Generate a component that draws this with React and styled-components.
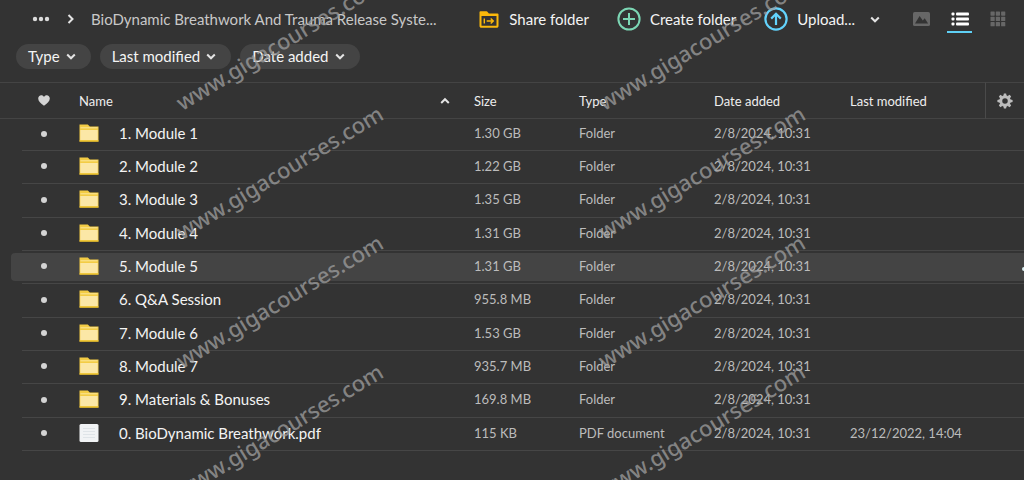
import React from "react";
import styled, { createGlobalStyle, css } from "styled-components";

const GlobalStyle = createGlobalStyle`
  * {
    box-sizing: border-box;
  }
  body {
    margin: 0;
    background: #333333;
    color: #f4f4f4;
    font-family: Lato, "Open Sans", sans-serif;
    font-size: 15px;
  }
  button {
    padding: 0;
    border: 0;
    background: none;
    color: inherit;
    font: inherit;
    cursor: pointer;
  }
  svg {
    flex-shrink: 0;
  }
`;

const Page = styled.main`
  position: relative;
  isolation: isolate;
  min-height: 100vh;
  overflow: hidden;
`;

const Toolbar = styled.header`
  display: flex;
  align-items: center;
  height: 38px;
  padding: 0 14px 0 32px;
`;

const Breadcrumb = styled.nav`
  display: flex;
  flex: 1;
  align-items: center;
  gap: 17px;
  min-width: 0;
`;

const IconButton = styled.button`
  display: flex;
  align-items: center;
  justify-content: center;
`;

const Crumb = styled.span`
  color: #c8c8c8;
  white-space: nowrap;
`;

const Actions = styled.div`
  display: flex;
  align-items: center;
  gap: 28px;
`;

const ActionButton = styled.button`
  display: flex;
  align-items: center;
  gap: 9px;
  white-space: nowrap;
`;

const UploadGroup = styled.div`
  display: flex;
  align-items: center;
  gap: 15px;
`;

const Views = styled.div`
  display: flex;
  gap: 13px;
  margin-left: 29px;
`;

const ViewButton = styled.button`
  display: flex;
  align-items: center;
  justify-content: center;
  width: 25px;
  height: 28px;
  padding-top: 2px;
  color: ${(props) => (props.$active ? "#ffffff" : "#676767")};
  border-bottom: 2px solid
    ${(props) => (props.$active ? "#5fd0f5" : "transparent")};
`;

const Filters = styled.div`
  display: flex;
  gap: 9px;
  height: 44px;
  padding: 6px 16px 0;
`;

const FilterButton = styled.button`
  display: flex;
  align-items: center;
  gap: 6px;
  height: 25px;
  padding: 0 15px 2px 12px;
  border-radius: 13px;
  background: #444444;
  white-space: nowrap;
`;

const FileTable = styled.table`
  width: 100%;
  table-layout: fixed;
  border-spacing: 0;
  font-size: 13px;
`;

const Col = styled.col`
  width: ${(props) => (props.$width ? `${props.$width}px` : "auto")};
`;

const HeadCell = styled.th`
  height: 37px;
  padding: 0;
  border-top: 1px solid #444444;
  border-bottom: 1px solid #444444;
  color: #eeeeee;
  font-weight: 400;
  text-align: left;
  white-space: nowrap;

  &:first-child {
    padding-left: 38px;
  }
  &:last-child {
    border-left: 1px solid #4a4a4a;
  }
`;

const HeadInner = styled.div`
  display: flex;
  align-items: center;
  justify-content: ${(props) => (props.$center ? "center" : "space-between")};
  padding-right: ${(props) => (props.$sorted ? "24px" : "0")};
`;

const Cell = styled.td`
  padding: 0 0 4px;
  color: #bcbcbc;
  white-space: nowrap;
`;

const FavouriteCell = styled(Cell)`
  padding: 0 0 3px 41px;
`;

const Row = styled.tr`
  position: relative;
  height: 33px;
  background: linear-gradient(#464646, #464646) 22px 100% / 100% 1px no-repeat;

  &:first-child {
    height: 32px;
  }
  &:nth-child(3n) {
    height: 34px;
  }

  ${(props) =>
    props.$selected &&
    css`
      ${FavouriteCell}::before {
        content: "";
        position: absolute;
        z-index: -1;
        inset: 2px 0 3px 11px;
        border-radius: 4px 0 0 4px;
        background: #444444;
      }
    `}
`;

const Dot = styled.span`
  display: block;
  width: 6px;
  height: 6px;
  border-radius: 50%;
  background: #d4d4d4;
`;

const MoreCell = styled(Cell)`
  text-align: right;
`;

const MoreMark = styled.span`
  display: inline-block;
  width: 2px;
  height: 4px;
  border-radius: 2px 0 0 2px;
  background: #d8eef0;
`;

const FileName = styled.div`
  display: flex;
  align-items: center;
  gap: 20px;
  color: #f4f4f4;
  font-size: 15px;
`;

// Tiled over the whole page, one mark per cell
const Watermarks = styled.div`
  position: absolute;
  inset: 0;
  display: grid;
  grid-template-columns: repeat(2, 422px);
  grid-auto-rows: 129px;
  padding-left: 187px;
  overflow: hidden;
  pointer-events: none;
`;

const Watermark = styled.span`
  align-self: start;
  justify-self: start;
  padding-top: 83px;
  color: rgba(158, 158, 158, 0.75);
  font-family: "Noto Sans", sans-serif;
  font-size: 22px;
  font-weight: 500;
  line-height: 36px;
  transform: rotate(-31deg);
  transform-origin: 0 100%;
`;

const Chevron = ({ up, size = 10 }) => (
  <svg width={size} height={size} viewBox="0 0 10 10" fill="none">
    <path
      d={up ? "M1.2 7 5 3.2 8.8 7" : "M1.2 3.5 5 7.3 8.8 3.5"}
      stroke="#e4e4e4"
      strokeWidth="2"
    />
  </svg>
);

const DotsIcon = () => (
  <svg width="18" height="6" viewBox="0 0 18 6" fill="#dcdcdc">
    <circle cx="3" cy="3" r="2.2" />
    <circle cx="9" cy="3" r="2.2" />
    <circle cx="15" cy="3" r="2.2" />
  </svg>
);

const CrumbArrow = () => (
  <svg width="7" height="10" viewBox="0 0 7 10" fill="none">
    <path d="M1.5 1 5.5 5 1.5 9" stroke="#e4e4e4" strokeWidth="2" />
  </svg>
);

const ShareFolderIcon = () => (
  <svg width="22" height="24" viewBox="0 0 22 24" fill="none">
    <path
      d="M2.5 19V5.2h5.9l2 2.2H19.5V19a.8.8 0 0 1-.8.8H3.3a.8.8 0 0 1-.8-.8Z"
      stroke="#fbb90b"
      strokeWidth="2"
      strokeLinejoin="round"
    />
    <path d="M2.5 5h6l2 2.3h9v1.7h-17Z" fill="#fbb90b" />
    <path
      d="M6.3 11.5v5M8.7 14h6.5M12.7 11.5l2.6 2.5-2.6 2.5"
      stroke="#fbb90b"
      strokeWidth="1.4"
    />
  </svg>
);

const CreateIcon = () => (
  <svg width="24" height="24" viewBox="0 0 24 24" fill="none">
    <g stroke="#7cd6b4" strokeWidth="2">
      <circle cx="12" cy="12" r="10.6" />
      <path d="M12 6v12M6 12h12" />
    </g>
  </svg>
);

const UploadIcon = () => (
  <svg width="24" height="24" viewBox="0 0 24 24" fill="none">
    <g stroke="#63d3fc" strokeWidth="2.2">
      <circle cx="12" cy="12" r="10.6" />
      <path d="M12 18V7M7.2 11.6 12 6.8l4.8 4.8" />
    </g>
  </svg>
);

const ImageIcon = () => (
  <svg width="17" height="14" viewBox="0 0 17 14">
    <rect width="17" height="14" rx="1.6" fill="currentColor" />
    <path d="M2 11.4 6.6 4l3.2 4.4 1.9-2.2 3.4 5.2Z" fill="#333333" />
  </svg>
);

const ListIcon = () => (
  <svg width="18" height="14" viewBox="0 0 18 14" fill="currentColor">
    {[0.5, 5.5, 10.5].map((y) => (
      <g key={y}>
        <rect x="0.5" y={y} width="3" height="3" rx="1" />
        <rect x="5" y={y} width="13" height="3" rx="1" />
      </g>
    ))}
  </svg>
);

const GridIcon = () => (
  <svg width="16" height="16" viewBox="0 0 16 16" fill="currentColor">
    {[0.5, 5.8, 11.1].map((y) =>
      [0.5, 5.8, 11.1].map((x) => (
        <rect key={`${x}-${y}`} x={x} y={y} width="4.2" height="4.2" rx="0.6" />
      ))
    )}
  </svg>
);

const HeartIcon = () => (
  <svg width="12" height="11" viewBox="0 0 12 11" fill="#d4d4d4">
    <path d="M6 10.8C2.7 8.2.2 6.2.2 3.5.2 1.6 1.6.3 3.2.3 4.4.3 5.5.9 6 1.9 6.5.9 7.6.3 8.8.3c1.6 0 3 1.3 3 3.2 0 2.7-2.5 4.7-5.8 7.3Z" />
  </svg>
);

const GearIcon = () => (
  <svg width="16" height="16" viewBox="0 0 16 16" fill="none">
    <circle cx="8" cy="8" r="4.2" stroke="#bcbcbc" strokeWidth="2.9" />
    <g fill="#bcbcbc">
      {[0, 45, 90, 135, 180, 225, 270, 315].map((a) => (
        <path key={a} d="M6.3 3 6.9.4h2.2L9.7 3Z" transform={`rotate(${a} 8 8)`} />
      ))}
    </g>
  </svg>
);

const FolderIcon = () => (
  <svg width="20" height="18" viewBox="0 0 20 18">
    <path d="M.5.5h8.3l2 2h8.7v15H.5Z" fill="#f3cc45" />
    <path d="M1.5 3.8h17" stroke="#fbe69b" strokeWidth="1" />
    <path d="M1.3 6h17.4v10.3H1.3Z" fill="#fbe7a6" />
    <path d="M.5 17h19" stroke="#edc229" strokeWidth="1.3" />
  </svg>
);

const DocumentIcon = () => (
  <svg width="20" height="18" viewBox="0 0 20 18">
    <rect x="0.5" width="19" height="18" rx="1.5" fill="#f1f3f5" />
    <path
      d="M4 4.5h12M4 7.5h12M4 10.5h12M4 13.5h12"
      stroke="#dfe4e8"
      strokeWidth="1"
    />
  </svg>
);

const folder = (name, size) => ({
  name,
  size,
  type: "Folder",
  added: "2/8/2024, 10:31",
  modified: "",
});

const files = [
  folder("1. Module 1", "1.30 GB"),
  folder("2. Module 2", "1.22 GB"),
  folder("3. Module 3", "1.35 GB"),
  folder("4. Module 4", "1.31 GB"),
  { ...folder("5. Module 5", "1.31 GB"), selected: true },
  folder("6. Q&A Session", "955.8 MB"),
  folder("7. Module 6", "1.53 GB"),
  folder("8. Module 7", "935.7 MB"),
  folder("9. Materials & Bonuses", "169.8 MB"),
  {
    name: "0. BioDynamic Breathwork.pdf",
    size: "115 KB",
    type: "PDF document",
    added: "2/8/2024, 10:31",
    modified: "23/12/2022, 14:04",
  },
];

const filters = ["Type", "Last modified", "Date added"];

export default () => (
  <>
    <GlobalStyle />
    <Page>
      <Toolbar>
        <Breadcrumb>
          <IconButton aria-label="Parent folders">
            <DotsIcon />
          </IconButton>
          <CrumbArrow />
          <Crumb>BioDynamic Breathwork And Trauma Release Syste...</Crumb>
        </Breadcrumb>
        <Actions>
          <ActionButton>
            <ShareFolderIcon />
            Share folder
          </ActionButton>
          <ActionButton>
            <CreateIcon />
            Create folder
          </ActionButton>
          <UploadGroup>
            <ActionButton>
              <UploadIcon />
              Upload...
            </ActionButton>
            <IconButton aria-label="Upload options">
              <Chevron />
            </IconButton>
          </UploadGroup>
        </Actions>
        <Views>
          <ViewButton aria-label="Media view">
            <ImageIcon />
          </ViewButton>
          <ViewButton aria-label="List view" $active>
            <ListIcon />
          </ViewButton>
          <ViewButton aria-label="Grid view">
            <GridIcon />
          </ViewButton>
        </Views>
      </Toolbar>
      <Filters>
        {filters.map((label) => (
          <FilterButton key={label}>
            {label}
            <Chevron />
          </FilterButton>
        ))}
      </Filters>
      <FileTable>
        <colgroup>
          <Col $width={79} />
          <Col />
          <Col $width={105} />
          <Col $width={135} />
          <Col $width={136} />
          <Col $width={135} />
          <Col $width={39} />
        </colgroup>
        <thead>
          <tr>
            <HeadCell aria-label="Favourite">
              <HeartIcon />
            </HeadCell>
            <HeadCell aria-sort="ascending">
              <HeadInner $sorted>
                Name
                <Chevron up />
              </HeadInner>
            </HeadCell>
            <HeadCell>Size</HeadCell>
            <HeadCell>Type</HeadCell>
            <HeadCell>Date added</HeadCell>
            <HeadCell>Last modified</HeadCell>
            <HeadCell>
              <HeadInner $center>
                <IconButton aria-label="Column settings">
                  <GearIcon />
                </IconButton>
              </HeadInner>
            </HeadCell>
          </tr>
        </thead>
        <tbody>
          {files.map((file) => (
            <Row key={file.name} $selected={file.selected}>
              <FavouriteCell>
                <Dot />
              </FavouriteCell>
              <Cell>
                <FileName>
                  {file.type === "Folder" ? <FolderIcon /> : <DocumentIcon />}
                  {file.name}
                </FileName>
              </Cell>
              <Cell>{file.size}</Cell>
              <Cell>{file.type}</Cell>
              <Cell>{file.added}</Cell>
              <Cell>{file.modified}</Cell>
              <MoreCell>{file.selected && <MoreMark />}</MoreCell>
            </Row>
          ))}
        </tbody>
      </FileTable>
      <Watermarks aria-hidden="true">
        {Array.from({ length: 8 }, (_, i) => (
          <Watermark key={i}>www.gigacourses.com</Watermark>
        ))}
      </Watermarks>
    </Page>
  </>
);
